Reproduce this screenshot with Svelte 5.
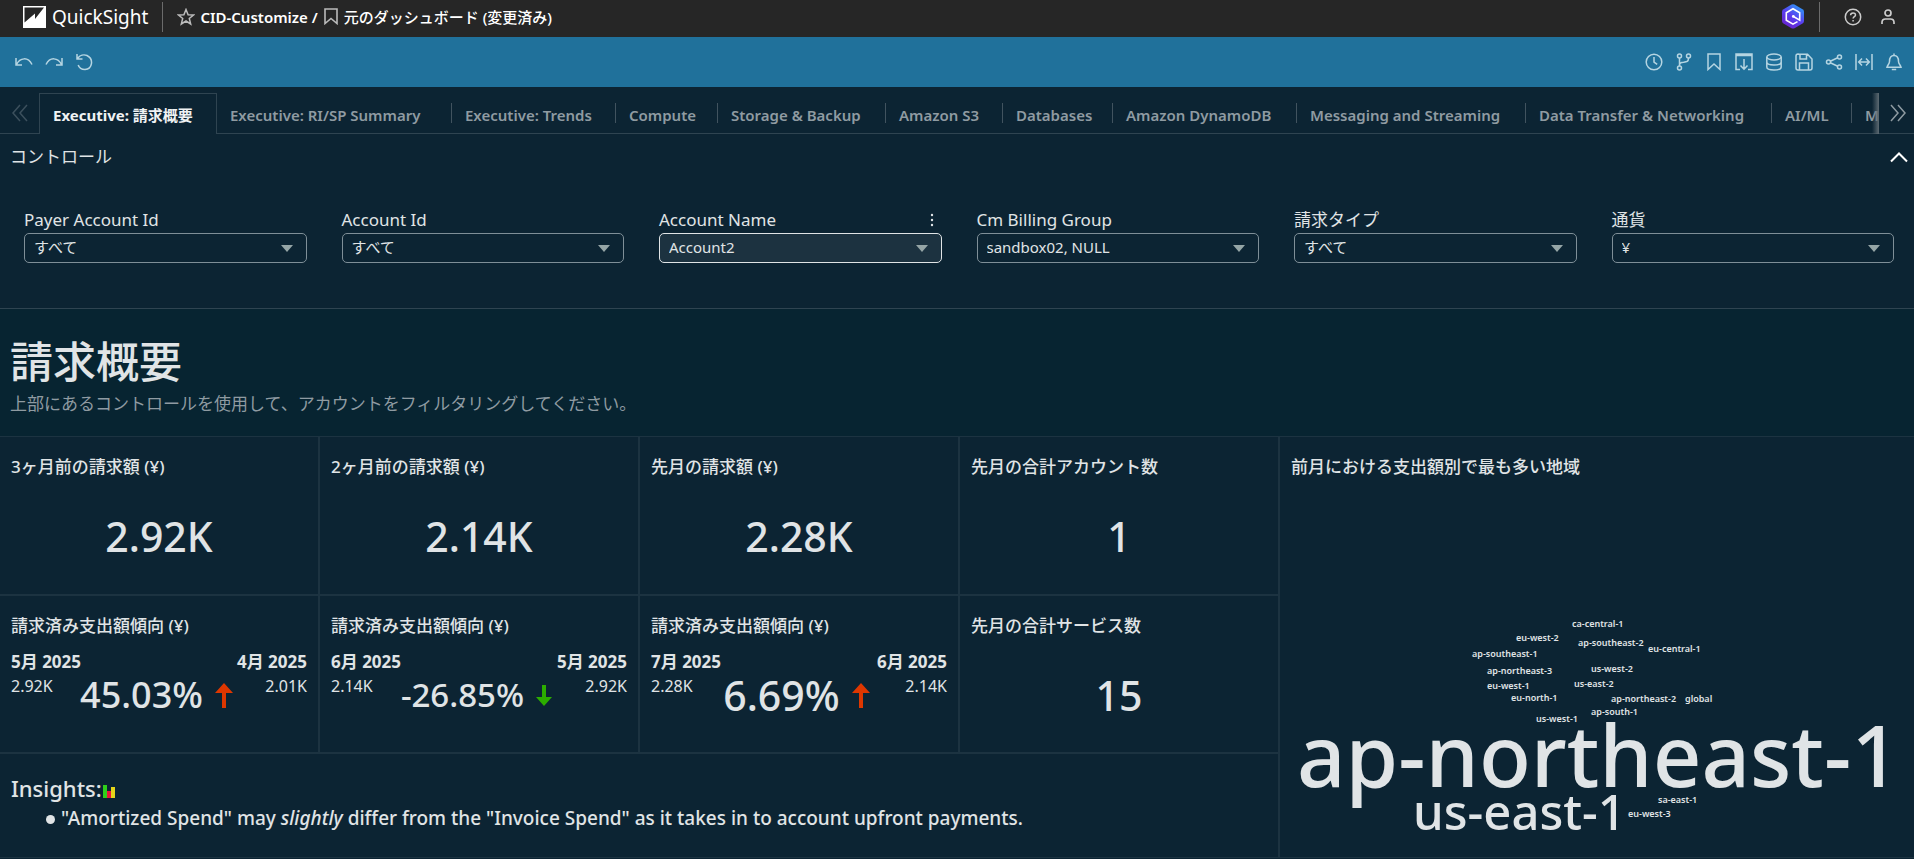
<script>
  let tabs = [
    { label: 'Executive: 請求概要', width: 178 },
    { label: 'Executive: RI/SP Summary', width: 235 },
    { label: 'Executive: Trends', width: 164 },
    { label: 'Compute', width: 102 },
    { label: 'Storage & Backup', width: 168 },
    { label: 'Amazon S3', width: 117 },
    { label: 'Databases', width: 110 },
    { label: 'Amazon DynamoDB', width: 184 },
    { label: 'Messaging and Streaming', width: 229 },
    { label: 'Data Transfer & Networking', width: 246 },
    { label: 'AI/ML', width: 80 },
    { label: 'Media Services', width: 150 }
  ];
  let activeTab = 0;
  let showControls = true;

  let controls = [
    { id: 'payer', label: 'Payer Account Id', value: 'すべて' },
    { id: 'account', label: 'Account Id', value: 'すべて' },
    { id: 'name', label: 'Account Name', value: 'Account2', focused: true },
    { id: 'group', label: 'Cm Billing Group', value: 'sandbox02, NULL' },
    { id: 'type', label: '請求タイプ', value: 'すべて' },
    { id: 'currency', label: '通貨', value: '¥' }
  ];

  let totals = [
    { title: '3ヶ月前の請求額 (¥)', value: '2.92K' },
    { title: '2ヶ月前の請求額 (¥)', value: '2.14K' },
    { title: '先月の請求額 (¥)', value: '2.28K' },
    { title: '先月の合計アカウント数', value: '1' }
  ];

  let trends = [
    { now: '5月 2025', nowValue: '2.92K', prev: '4月 2025', prevValue: '2.01K', change: '45.03%', up: true, size: 'medium' },
    { now: '6月 2025', nowValue: '2.14K', prev: '5月 2025', prevValue: '2.92K', change: '-26.85%', up: false, size: 'small' },
    { now: '7月 2025', nowValue: '2.28K', prev: '6月 2025', prevValue: '2.14K', change: '6.69%', up: true, size: 'large' }
  ];

  // x is measured from the middle of the card, y from its top
  let words = [
    { text: 'ca-central-1', x: -25, y: 186 },
    { text: 'eu-west-2', x: -81, y: 200 },
    { text: 'ap-southeast-2', x: -19, y: 205 },
    { text: 'eu-central-1', x: 51, y: 211 },
    { text: 'ap-southeast-1', x: -125, y: 216 },
    { text: 'us-west-2', x: -6, y: 231 },
    { text: 'ap-northeast-3', x: -110, y: 233 },
    { text: 'us-east-2', x: -23, y: 246 },
    { text: 'eu-west-1', x: -110, y: 248 },
    { text: 'eu-north-1', x: -86, y: 260 },
    { text: 'ap-northeast-2', x: 14, y: 261 },
    { text: 'global', x: 88, y: 261 },
    { text: 'ap-south-1', x: -6, y: 274 },
    { text: 'us-west-1', x: -61, y: 281 },
    { text: 'ap-northeast-1', x: -300, y: 317, size: 85 },
    { text: 'us-east-1', x: -184, y: 374, size: 49 },
    { text: 'sa-east-1', x: 61, y: 362 },
    { text: 'eu-west-3', x: 31, y: 376 }
  ];
</script>

<div class="app">
  <header class="topbar">
    <a class="brand" href="#home">
      <svg width="23" height="22" viewBox="0 0 23 22">
        <path fill="#fff" d="M0 0h23v22H0z" />
        <path fill="#262626" d="M1.500 1.500h19.500L12 13V7.500L1.500 16.500z" />
      </svg>
      <span>QuickSight</span>
    </a>
    <span class="rule"></span>
    <button class="icon star" aria-label="Favorite">
      <svg width="18" height="18" viewBox="0 0 18 18" fill="none" stroke="#bbb" stroke-width="1.5">
        <path d="M9 1.5l2.1 5.2 5.4.3-4.200 3.500 1.400 5.500L9 13l-4.700 3 1.400-5.500L1.500 7l5.400-.3z" />
      </svg>
    </button>
    <h1 class="crumb">
      <span>CID-Customize /</span>
      <svg width="14" height="17" viewBox="0 0 14 17" fill="none" stroke="#bbb" stroke-width="1.6">
        <path d="M1 1h12v14.500l-6-5-6 5z" />
      </svg>
      <span class="version">元のダッシュボード (変更済み)</span>
    </h1>
    <div class="account">
      <button class="icon" aria-label="Amazon Q">
        <svg width="22" height="25" viewBox="0 0 22 25">
          <defs>
            <linearGradient id="q" x1="0.8" y1="0" x2="0.2" y2="1">
              <stop offset="0" stop-color="#2aa0f8" />
              <stop offset=".5" stop-color="#5a3ff0" />
              <stop offset="1" stop-color="#6a1fc8" />
            </linearGradient>
          </defs>
          <path fill="url(#q)" d="M9.500.6q1.500-.8 3 0l8 4.600q1.500.9 1.500 2.600v9.200q0 1.700-1.500 2.600l-8 4.600q-1.500.8-3 0l-8-4.600Q0 18.700 0 17V7.800q0-1.700 1.500-2.600z" />
          <path fill="none" stroke="#fff" stroke-width="1.600" d="M15.500 17.600L11 20.200l-6.700-3.900V8.700L11 4.800l6.700 3.900v7.400L11.500 12.500" />
          <circle cx="11.300" cy="12.400" r="1.400" fill="#fff" />
        </svg>
      </button>
      <span class="rule"></span>
      <button class="icon help" aria-label="Help">
        <svg width="18" height="18" viewBox="0 0 18 18" fill="none" stroke="#ccc" stroke-width="1.500">
          <circle cx="9" cy="9" r="7.700" />
          <path d="M6.600 7.200c0-3 4.900-3 4.900-.2 0 1.700-2.400 1.700-2.400 3.500M9.100 12v1.600" />
        </svg>
      </button>
      <button class="icon" aria-label="User">
        <svg width="16" height="18" viewBox="0 0 16 18" fill="none" stroke="#ccc" stroke-width="1.700">
          <circle cx="8" cy="5" r="3" />
          <path d="M2 16v-1.500q0-3.500 3.500-3.500h5q3.500 0 3.500 3.500V16" />
        </svg>
      </button>
    </div>
  </header>

  <div class="toolbar">
    <div class="tools">
      <button class="icon" aria-label="Undo">
        <svg viewBox="0 0 18 18"><path d="M1 5v7h6M1.500 11.500C5 4.500 13 3.500 17 11.500" /></svg>
      </button>
      <button class="icon" aria-label="Redo">
        <svg viewBox="0 0 18 18"><path d="M17 5v7h-6M16.500 11.500C13 4.500 5 3.500 1 11.500" /></svg>
      </button>
      <button class="icon" aria-label="Reset">
        <svg viewBox="0 0 18 18"><path d="M2 1v5h5.500M2.500 5.500C5 2 9 1.200 12 2.500c7 3.500 5.500 13.500-2 14-3.500 0-6-2-6.800-4.500" /></svg>
      </button>
    </div>
    <div class="tools">
      <button class="icon" aria-label="Schedules">
        <svg viewBox="0 0 18 18"><circle cx="9" cy="9" r="7.800" /><path d="M9 4v5l3.200 2.300" /></svg>
      </button>
      <button class="icon" aria-label="Versions">
        <svg viewBox="0 0 18 18"><circle cx="4.500" cy="3" r="2" /><circle cx="13.500" cy="3" r="2" /><circle cx="4.500" cy="15" r="2" /><path d="M4.500 5v8M13.500 5c0 4-2 4-5 4.200-2.500 0-4 1-4 3" /></svg>
      </button>
      <button class="icon" aria-label="Bookmarks">
        <svg viewBox="0 0 18 18"><path d="M3 1h12v15.500l-6-5.500-6 5.500z" /></svg>
      </button>
      <button class="icon" aria-label="Export">
        <svg viewBox="0 0 18 18"><path d="M5 16.500H1V1h16v15.500h-4M1 2.500h16M9 6v10.500M5.500 12.500L9 16.200l3.500-3.700" /></svg>
      </button>
      <button class="icon" aria-label="Datasets">
        <svg viewBox="0 0 18 18"><ellipse cx="9" cy="4" rx="7.200" ry="3" /><path d="M1.800 4v10c0 4 14.400 4 14.400 0V4M1.800 9c0 4 14.400 4 14.400 0" /></svg>
      </button>
      <button class="icon" aria-label="Save">
        <svg viewBox="0 0 18 18"><path d="M3 1.200h9.500L17 6v9q0 2-2 2H3q-2 0-2-2V3q0-2 2-2zM5 1.200V6h6.500V1.200M4.500 17v-7h9v7M4.500 10h9" /></svg>
      </button>
      <button class="icon" aria-label="Share">
        <svg viewBox="0 0 18 18"><circle cx="3.500" cy="9" r="2" /><circle cx="14.500" cy="4" r="2" /><circle cx="14.500" cy="14" r="2" /><path d="M5.300 8.200l7.400-3.400M5.300 9.800l7.400 3.400" /></svg>
      </button>
      <button class="icon" aria-label="Fit to width">
        <svg viewBox="0 0 18 18"><path d="M1 1v16M17 1v16M4 9h10M7 5.500L3.700 9 7 12.500M11 5.500L14.300 9 11 12.500" /></svg>
      </button>
      <button class="icon" aria-label="Alerts">
        <svg viewBox="0 0 18 18"><path d="M9 2.500C5 2.500 4.500 6 4.500 8.500S2.500 12 2 14.200h14c-.5-2.200-2.500-3.200-2.500-5.700s-.5-6-4.500-6zM9 .5v2M6.800 16.500h4.400" /></svg>
      </button>
    </div>
  </div>

  <nav class="tabbar">
    <button class="icon scroll dim" aria-label="Previous sheets">
      <svg width="16" height="18" viewBox="0 0 16 18"><path d="M8 1L1 9l7 8M15 1L8 9l7 8" /></svg>
    </button>
    <div class="tabs">
      {#each tabs as tab, i}
        <button
          class="tab"
          class:active={i === activeTab}
          style="width: {tab.width}px"
          on:click={() => (activeTab = i)}>{tab.label}</button>
      {/each}
    </div>
    <button class="icon scroll" aria-label="Next sheets">
      <svg width="16" height="18" viewBox="0 0 16 18"><path d="M1 1l7 8-7 8M8 1l7 8-7 8" /></svg>
    </button>
  </nav>

  <section class="controls">
    <div class="controls-head">
      <h2>コントロール</h2>
      <button class="icon" aria-label="Toggle controls" on:click={() => (showControls = !showControls)}>
        <svg width="18" height="12" viewBox="0 0 18 12" fill="none" stroke="#fff" stroke-width="2">
          <path d="M1 10.500l8-8 8 8" />
        </svg>
      </button>
    </div>
    {#if showControls}
      <div class="fields">
        {#each controls as control}
          <div class="field" class:focused={control.focused}>
            <div class="field-head">
              <label for={control.id}>{control.label}</label>
              {#if control.focused}
                <button class="icon" aria-label="Options">
                  <svg width="4" height="14" viewBox="0 0 4 14" fill="#e0e4e6">
                    <circle cx="2" cy="2" r="1.200" /><circle cx="2" cy="7" r="1.200" /><circle cx="2" cy="12" r="1.200" />
                  </svg>
                </button>
              {/if}
            </div>
            <div class="box">
              <select id={control.id}>
                <option>{control.value}</option>
              </select>
              <svg class="caret" width="12" height="7" viewBox="0 0 12 7"><path fill="#95a5a6" d="M0 0h12L6 7z" /></svg>
            </div>
          </div>
        {/each}
      </div>
    {/if}
  </section>

  <section class="intro">
    <h2>請求概要</h2>
    <p>上部にあるコントロールを使用して、アカウントをフィルタリングしてください。</p>
  </section>

  <main class="grid">
    {#each totals as total}
      <article class="card">
        <h3>{total.title}</h3>
        <p class="kpi">{total.value}</p>
      </article>
    {/each}

    <article class="card cloud">
      <h3>前月における支出額別で最も多い地域</h3>
      {#each words as word}
        <span
          class="word"
          class:tiny={!word.size}
          style="left: calc(50% + {word.x}px); top: {word.y}px; font-size: {word.size || 9}px">{word.text}</span>
      {/each}
    </article>

    {#each trends as trend}
      <article class="card">
        <h3>請求済み支出額傾向 (¥)</h3>
        <div class="trend">
          <div class="side">
            <strong>{trend.now}</strong>
            <span>{trend.nowValue}</span>
          </div>
          <div class="change {trend.size}">
            <span>{trend.change}</span>
            {#if trend.up}
              <svg width="18" height="25" viewBox="0 0 18 25" fill="#de3700"><path d="M9 0l9 10h-7v15H7V10H0z" /></svg>
            {:else}
              <svg width="16" height="21" viewBox="0 0 16 21" fill="#2cad00"><path d="M8 21l8-9H10V0H6v12H0z" /></svg>
            {/if}
          </div>
          <div class="side right">
            <strong>{trend.prev}</strong>
            <span>{trend.prevValue}</span>
          </div>
        </div>
      </article>
    {/each}
    <article class="card">
      <h3>先月の合計サービス数</h3>
      <p class="kpi">15</p>
    </article>

    <article class="card insights">
      <h3>
        Insights:
        <svg width="12" height="13" viewBox="0 0 12 13">
          <path fill="#2fd01a" d="M0 0h4v13H0z" /><path fill="#e8173c" d="M4 6h4v7H4z" /><path fill="#e6d51a" d="M8 2h4v11H8z" />
        </svg>
      </h3>
      <ul>
        <li>"Amortized Spend" may <em>slightly</em> differ from the "Invoice Spend" as it takes in to account upfront payments.</li>
      </ul>
    </article>
  </main>
</div>

<style>
:global(body) {
    background: #0c2433;
}

.app {
    font-family: "Noto Sans", "Noto Sans CJK JP", sans-serif;
    font-size: 17px;
    color: #e0e4e6;
    overflow: hidden;
}

h1, h2, h3, p, ul {
    margin: 0;
    padding: 0;
    font-weight: 400;
}

button {
    font-family: inherit;
    color: inherit;
    background: none;
    border: none;
    padding: 0;
    cursor: pointer;
}

.icon {
    display: flex;
    align-items: center;
    justify-content: center;
}

.topbar {
    display: flex;
    align-items: center;
    height: 37px;
    padding: 0 18px 4px 23px;
    box-sizing: border-box;
    background: #262626;
    color: #fff;
}

.brand {
    display: flex;
    align-items: center;
    gap: 6px;
    font-size: 19px;
    line-height: 30px;
    color: #fff;
    text-decoration: none;
}

.rule {
    width: 1px;
    height: 30px;
    background: #6b6b6b;
}

.brand + .rule {
    margin-left: 14px;
}

.star {
    margin: 0 5px 0 14px;
}

.crumb {
    display: flex;
    align-items: center;
    gap: 6px;
    font-size: 15px;
    font-weight: 600;
}

.version {
    font-weight: 500;
}

.account {
    display: flex;
    align-items: center;
    margin-left: auto;
}

.account .rule {
    margin: 0 24px 0 15px;
}

.help {
    margin-right: 18px;
}

.toolbar {
    display: flex;
    justify-content: space-between;
    align-items: center;
    height: 50px;
    padding: 0 11px 0 15px;
    background: #20719b;
}

.tools {
    display: flex;
    gap: 12px;
}

.tools svg {
    width: 18px;
    height: 18px;
    fill: none;
    stroke: #b5d5e2;
    stroke-width: 1.5;
}

.tabbar {
    display: flex;
    height: 47px;
    padding-top: 6px;
    box-sizing: border-box;
    box-shadow: inset 0 -1px #2f4451;
}

.scroll {
    width: 35px;
    padding: 0 0 2px 2px;
}

.scroll.dim {
    width: 39px;
    padding: 0 0 2px;
}

.scroll svg {
    fill: none;
    stroke: #8f9ba2;
    stroke-width: 1.5;
}

.scroll.dim svg {
    stroke: #3c505d;
}

.tabs {
    position: relative;
    display: flex;
    flex: 1;
    min-width: 0;
    overflow: hidden;
}

.tabs::after {
    content: "";
    position: absolute;
    top: 0;
    right: 0;
    width: 7px;
    height: 100%;
    background: linear-gradient(to right, transparent, #5d6a72);
}

.tab {
    position: relative;
    flex: none;
    box-sizing: border-box;
    padding: 2px 0 0 13px;
    font-size: 15px;
    font-weight: 600;
    line-height: 20px;
    color: #8f9ba2;
    text-align: left;
    white-space: nowrap;
}

.tab::after {
    content: "";
    position: absolute;
    top: 10px;
    right: 0;
    width: 1px;
    height: 20px;
    background: #41535f;
}

.tab.active {
    border: 1px solid #2f4451;
    border-bottom: none;
    background: #0c2433;
    color: #f0f2f3;
    font-weight: 700;
}

.tab.active::after {
    display: none;
}

.controls {
    min-height: 174px;
    border-bottom: 1px solid #2f4451;
}

.controls-head {
    display: flex;
    justify-content: space-between;
    padding: 10px 6px 0 10px;
}

.controls-head h2 {
    font-size: 17px;
    line-height: 26px;
}

.fields {
    display: grid;
    grid-template-columns: repeat(6, 1fr);
    gap: 35px;
    padding: 36px 20px 45px 24px;
}

.field-head {
    display: flex;
    justify-content: space-between;
    align-items: center;
    height: 27px;
    padding-right: 8px;
}

.field-head label {
    font-size: 17px;
    line-height: 24px;
}

.box {
    display: grid;
    align-items: center;
}

.box select,
.caret {
    grid-area: 1 / 1;
}

.box select {
    appearance: none;
    width: 100%;
    height: 30px;
    padding: 0 9px 2px;
    border: 1px solid #7f8f98;
    border-radius: 5px;
    background: transparent;
    color: inherit;
    font-family: inherit;
    font-size: 15px;
}

.focused select {
    border-color: #e0e4e6;
    background: #1c3240;
}

.caret {
    justify-self: end;
    margin-right: 14px;
    pointer-events: none;
}

.intro {
    height: 127px;
    padding: 23px 10px 0;
    box-sizing: border-box;
    background: #072431;
}

.intro h2 {
    font-size: 43px;
    font-weight: 500;
    line-height: 60px;
}

.intro p {
    line-height: 24px;
    color: #8f9ba2;
}

.grid {
    display: grid;
    grid-template-columns: repeat(4, 318fr) 634fr;
    grid-template-rows: 157px 156px 103px;
    gap: 2px;
    padding: 1px 0;
    background: #1c3341;
}

.card {
    min-width: 0;
    padding: 16px 11px 0;
    background: #0c2433;
}

.card h3 {
    font-size: 17px;
    font-weight: 500;
    line-height: 28px;
    white-space: nowrap;
}

.kpi {
    margin-top: 25px;
    font-size: 41px;
    font-weight: 500;
    line-height: 60px;
    text-align: center;
}

.trend {
    display: grid;
    grid-template-columns: auto 1fr auto;
    margin-top: 10px;
}

.side {
    grid-area: 1 / 1;
    display: flex;
    flex-direction: column;
    line-height: 24px;
    font-size: 16px;
}

.side strong {
    font-size: 17px;
}

.side.right {
    grid-column: 3;
    align-items: flex-end;
}

/* the change sits on the second line, between the two amounts */
.change {
    grid-area: 1 / 1 / 2 / 4;
    display: flex;
    align-items: center;
    justify-content: center;
    gap: 12px;
    margin-top: 21px;
    padding-right: 5px;
    line-height: 48px;
    font-weight: 500;
}

.small {
    font-size: 33px;
}

.medium {
    font-size: 36px;
}

.large {
    font-size: 41px;
}

.cloud {
    position: relative;
    grid-area: 1 / 5 / 4 / 6;
}

.word {
    position: absolute;
    transform: translateY(-50%);
    line-height: 1;
    font-weight: 500;
    white-space: nowrap;
}

.tiny {
    font-weight: 600;
}

.insights {
    grid-column: 1 / 5;
    padding-top: 18px;
}

.insights h3 {
    display: flex;
    align-items: center;
    gap: 1px;
    font-size: 22px;
    line-height: 32px;
}

.insights svg {
    margin-top: 6px;
}

.insights ul {
    list-style: none;
    padding-left: 35px;
}

.insights li {
    display: block;
    font-size: 19px;
    font-weight: 500;
    line-height: 28px;
}

.insights li::before {
    content: "";
    display: inline-block;
    width: 9px;
    height: 9px;
    margin: 0 6px 1px 0;
    border-radius: 50%;
    background: #e0e4e6;
}
</style>
